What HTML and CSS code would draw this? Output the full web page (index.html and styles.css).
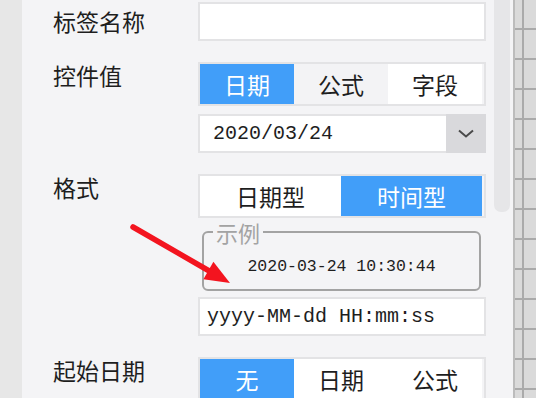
FILE: index.html
```html
<!DOCTYPE html>
<html lang="zh-CN">
<head>
  <meta charset="UTF-8" />
  <meta name="viewport" content="width=device-width, initial-scale=1.0" />
  <title>标签属性</title>
  <link rel="stylesheet" href="styles.css">
</head>
<body>
  <div class="side-strip"></div>

  <div class="panel">
    <div class="form">
      <div class="form-row form-row--center">
        <span class="label">标签名称</span>
        <div class="control">
          <div class="input"></div>
        </div>
      </div>

      <div class="form-row">
        <span class="label">控件值</span>
        <div class="control">
          <div class="segmented">
            <span class="seg active">日期</span>
            <span class="seg hover">公式</span>
            <span class="seg">字段</span>
          </div>
          <div class="select">
            <span class="select-value">2020/03/24</span>
            <span class="select-arrow">
              <svg width="16" height="9" viewBox="0 0 16 9"><polyline points="1,1.5 8,7.5 15,1.5" fill="none" stroke="#4a4a4a" stroke-width="2"/></svg>
            </span>
          </div>
        </div>
      </div>

      <div class="form-row">
        <span class="label">格式</span>
        <div class="control">
          <div class="segmented">
            <span class="seg seg--half">日期型</span>
            <span class="seg seg--half active">时间型</span>
          </div>
          <fieldset class="sample">
            <legend>示例</legend>
            <div class="sample-text">2020-03-24 10:30:44</div>
          </fieldset>
          <div class="input input--mono">yyyy-MM-dd HH:mm:ss</div>
        </div>
      </div>

      <div class="form-row">
        <span class="label">起始日期</span>
        <div class="control">
          <div class="segmented">
            <span class="seg active">无</span>
            <span class="seg">日期</span>
            <span class="seg">公式</span>
          </div>
        </div>
      </div>
    </div>

    <div class="scroll">
      <div class="scroll-thumb"></div>
    </div>
  </div>

  <div class="canvas"></div>

  <!-- annotation arrow drawn over the form -->
  <svg class="pointer" width="115" height="70" viewBox="0 0 115 70">
    <line x1="8" y1="7" x2="86" y2="52" stroke="#f3141f" stroke-width="5.5" stroke-linecap="round"/>
    <polygon points="105,63 78.4,59.2 88.4,41.8" fill="#f3141f"/>
  </svg>
</body>
</html>
```

FILE: styles.css
```css
* {
  margin: 0;
  padding: 0;
  box-sizing: border-box;
}

body {
  display: flex;
  height: 398px;
  overflow: hidden;
  background: #f4f4f6;
  font-family: "Noto Sans CJK SC", "Noto Sans", sans-serif;
  color: #1e1e1e;
  position: relative;
}

.side-strip {
  width: 22px;
  flex-shrink: 0;
  background: #e7e7e7;
}

.panel {
  display: flex;
  width: 491px;
  flex-shrink: 0;
  background: #f4f4f6;
}

.form {
  width: 472px;
  padding: 2px 0 0 31px;
}

.form-row {
  display: flex;
  align-items: flex-start;
  margin-bottom: 21px;
}

.form-row--center {
  align-items: center;
}

.label {
  width: 145px;
  flex-shrink: 0;
  font-size: 23px;
  line-height: 27px;
}

.control {
  width: 288px;
  display: flex;
  flex-direction: column;
}

.input {
  height: 39px;
  background: #fff;
  border: 2px solid #e3e3e5;
}

.input--mono {
  margin-top: 6px;
  padding-left: 7px;
  font-family: "Liberation Mono", monospace;
  font-size: 20px;
  line-height: 35px;
}

.segmented {
  display: flex;
  height: 44px;
  border: 2px solid #e3e3e5;
  background: #f4f4f6;
}

.seg {
  width: 94px;
  background: #fff;
  font-size: 23px;
  line-height: 40px;
  text-align: center;
}

.seg--half {
  width: 141px;
}

.seg.hover {
  background: #f3f3f5;
}

.seg.active {
  background: #419ef9;
  color: #fff;
}

.select {
  display: flex;
  height: 39px;
  margin-top: 8px;
  background: #fff;
  border: 2px solid #e3e3e5;
  border-right: none;
}

.select-value {
  flex: 1;
  padding-left: 13px;
  font-family: "Liberation Mono", monospace;
  font-size: 20px;
  line-height: 35px;
}

.select-arrow {
  width: 40px;
  margin: -2px 0;
  background: #d9d9dc;
  display: flex;
  align-items: center;
  justify-content: center;
}

.sample {
  margin: 2px 5px 0 4px;
  padding: 13px 0 12px;
  border: 2px solid #a3a3a3;
  border-radius: 6px;
}

.sample legend {
  margin-left: 9px;
  padding: 0 3px;
  font-size: 22px;
  line-height: 24px;
  color: #a3a3a3;
}

.sample-text {
  text-align: center;
  font-family: "Liberation Mono", monospace;
  font-size: 16.5px;
  line-height: 20px;
}

.scroll {
  width: 19px;
  padding-left: 0;
}

.scroll-thumb {
  width: 16px;
  height: 212px;
  background: #e6e6e8;
  border-radius: 0 0 7px 7px;
}

.canvas {
  flex: 1;
  border-left: 2px solid #bcbcbc;
  background-color: #dadada;
  background-image:
    linear-gradient(to right, #aaaaaa 2px, transparent 2px),
    linear-gradient(to bottom, #aaaaaa 2px, transparent 2px);
  background-size: 30px 30px;
  background-position: 7px 28px;
}

.pointer {
  position: absolute;
  left: 125px;
  top: 220px;
}
```
